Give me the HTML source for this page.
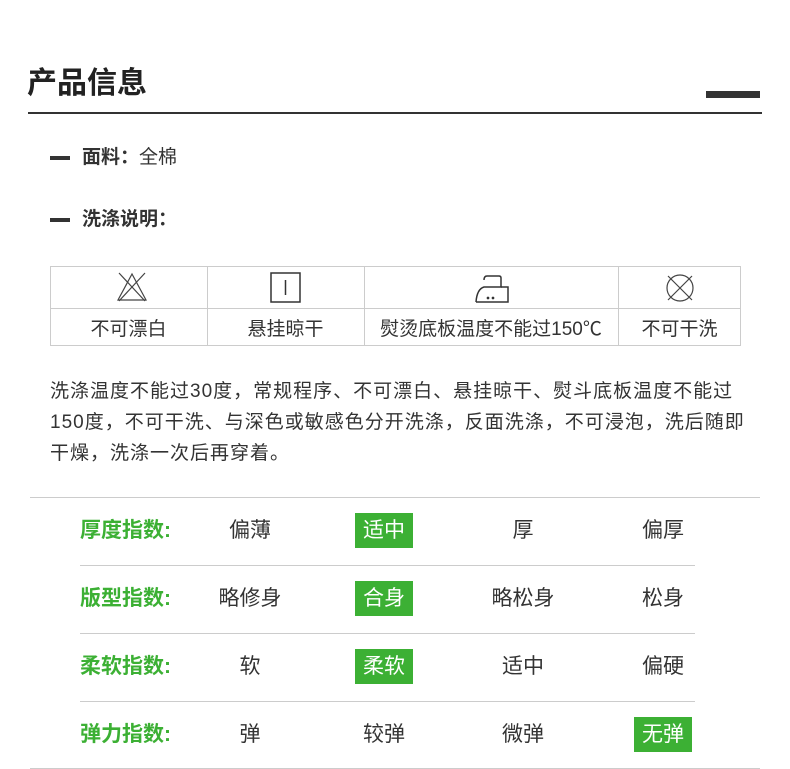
<!DOCTYPE html>
<html><head><meta charset="utf-8"><style>
body{margin:0;width:790px;height:769px;background:#fff;position:relative;font-family:"Liberation Sans","Noto Sans CJK SC",sans-serif;color:#333;overflow:hidden}
.a{position:absolute}
.t{position:absolute;white-space:nowrap}
.cell{position:absolute;display:flex;align-items:center;justify-content:center;font-size:19px;color:#333}
.lbl{position:absolute;left:80px;font-size:21px;font-weight:bold;color:#3cb034;line-height:36px}
.v{position:absolute;width:120px;text-align:center;font-size:21px;line-height:36px;color:#333}
.g{position:absolute;width:58px;height:35px;background:#3cb034;color:#fff;font-size:21px;line-height:35px;text-align:center}
</style></head><body>
<div class="t" style="left:27px;top:63px;font-size:30px;font-weight:bold;color:#222;line-height:42px">产品信息</div>
<div class="a" style="left:706px;top:91px;width:54px;height:7px;background:#333"></div>
<div class="a" style="left:28px;top:112px;width:734px;height:2px;background:#333"></div>

<div class="a" style="left:50px;top:156px;width:20px;height:4px;background:#333"></div>
<div class="t" style="left:82px;top:145px;font-size:19px;line-height:26px"><b>面料：</b>全棉</div>
<div class="a" style="left:50px;top:218px;width:20px;height:4px;background:#333"></div>
<div class="t" style="left:82px;top:207px;font-size:19px;line-height:26px"><b>洗涤说明：</b></div>

<div class="a" style="left:50px;top:266px;width:691px;height:80px;border:1px solid #ccc;box-sizing:border-box"></div>
<div class="a" style="left:50px;top:308px;width:691px;height:1px;background:#ccc"></div>
<div class="a" style="left:207px;top:266px;width:1px;height:80px;background:#ccc"></div>
<div class="a" style="left:364px;top:266px;width:1px;height:80px;background:#ccc"></div>
<div class="a" style="left:618px;top:266px;width:1px;height:80px;background:#ccc"></div>

<svg class="a" style="left:114px;top:270px" width="36" height="34" viewBox="0 0 36 34" fill="none" stroke="#444" stroke-width="1.2">
<path d="M18 4 L4 30 H32 Z"/><path d="M5 3 L31 31 M31 3 L5 31"/></svg>
<svg class="a" style="left:270px;top:272px" width="32" height="32" viewBox="0 0 32 32" fill="none" stroke="#333" stroke-width="1.5">
<rect x="1" y="1" width="29" height="29"/><path d="M15.5 8 V23"/></svg>
<svg class="a" style="left:474px;top:272px" width="36" height="32" viewBox="0 0 36 32" fill="none" stroke="#333" stroke-width="1.5">
<path d="M2 30 Q3 17 10 15 H27 V6 Q27 4 25 4 H13 Q10 4 10 8"/><path d="M2 30 H34 V15 H27"/><circle cx="14" cy="26" r=".6" fill="#333"/><circle cx="19" cy="26" r=".6" fill="#333"/></svg>
<svg class="a" style="left:663px;top:271px" width="34" height="34" viewBox="0 0 34 34" fill="none" stroke="#444" stroke-width="1.2">
<circle cx="17" cy="17" r="13"/><path d="M5 5 L29 29 M29 5 L5 29"/></svg>

<div class="cell" style="left:50px;top:309px;width:157px;height:37px">不可漂白</div>
<div class="cell" style="left:207px;top:309px;width:157px;height:37px">悬挂晾干</div>
<div class="cell" style="left:364px;top:309px;width:254px;height:37px">熨烫底板温度不能过150℃</div>
<div class="cell" style="left:618px;top:309px;width:123px;height:37px">不可干洗</div>

<div class="a" style="left:50px;top:376px;width:705px;font-size:19px;letter-spacing:1px;line-height:31px;color:#333">洗涤温度不能过30度，常规程序、不可漂白、悬挂晾干、熨斗底板温度不能过<br>150度，不可干洗、与深色或敏感色分开洗涤，反面洗涤，不可浸泡，洗后随即<br>干燥，洗涤一次后再穿着。</div>

<div class="a" style="left:30px;top:497px;width:730px;height:1px;background:#ccc"></div>
<div class="a" style="left:80px;top:565px;width:615px;height:1px;background:#ccc"></div>
<div class="a" style="left:80px;top:633px;width:615px;height:1px;background:#ccc"></div>
<div class="a" style="left:80px;top:701px;width:615px;height:1px;background:#ccc"></div>
<div class="a" style="left:30px;top:768px;width:730px;height:1px;background:#ccc"></div>

<div class="lbl" style="top:513px">厚度指数:</div>
<div class="v" style="left:190px;top:513px">偏薄</div>
<div class="g" style="left:355px;top:513px">适中</div>
<div class="v" style="left:463px;top:513px">厚</div>
<div class="v" style="left:603px;top:513px">偏厚</div>

<div class="lbl" style="top:581px">版型指数:</div>
<div class="v" style="left:190px;top:581px">略修身</div>
<div class="g" style="left:355px;top:581px">合身</div>
<div class="v" style="left:463px;top:581px">略松身</div>
<div class="v" style="left:603px;top:581px">松身</div>

<div class="lbl" style="top:649px">柔软指数:</div>
<div class="v" style="left:190px;top:649px">软</div>
<div class="g" style="left:355px;top:649px">柔软</div>
<div class="v" style="left:463px;top:649px">适中</div>
<div class="v" style="left:603px;top:649px">偏硬</div>

<div class="lbl" style="top:717px">弹力指数:</div>
<div class="v" style="left:190px;top:717px">弹</div>
<div class="v" style="left:324px;top:717px">较弹</div>
<div class="v" style="left:463px;top:717px">微弹</div>
<div class="g" style="left:634px;top:717px">无弹</div>
</body></html>
